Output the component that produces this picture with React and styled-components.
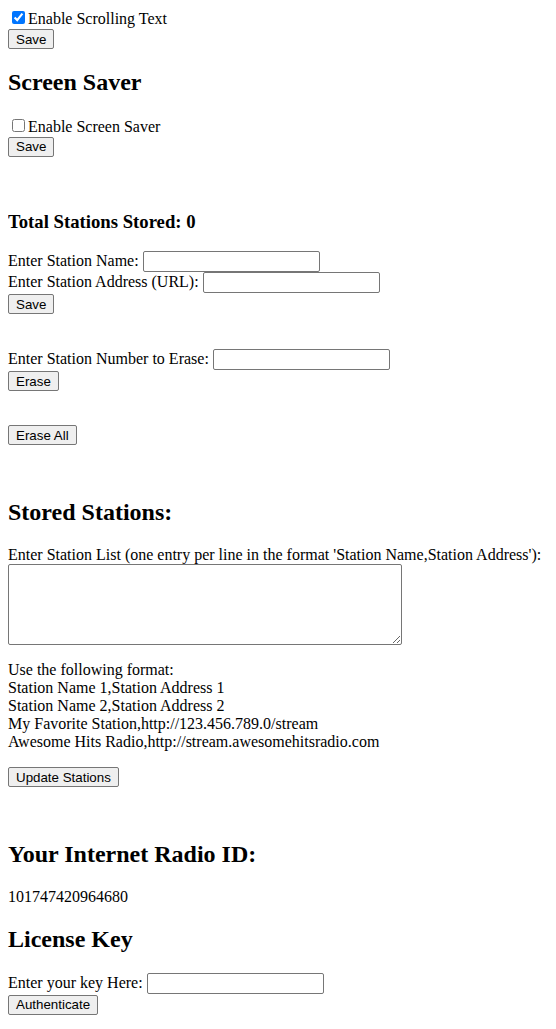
import React from "react";
import styled, { createGlobalStyle } from "styled-components";

const Global = createGlobalStyle`
  body {
    margin: 8px;
    background: #ffffff;
    color: #000000;
    font-family: "Liberation Serif", "Times New Roman", serif;
    font-size: 16px;
  }
`;

const Section = styled.div`
  padding-top: ${(p) => p.gap || 0}px;
`;

const Heading = styled.h2`
  font-size: 24px;
  font-weight: 700;
  margin: 19.92px 0;
`;

const SubHeading = styled.h3`
  font-size: 18.72px;
  font-weight: 700;
  margin: 18.72px 0;
`;

const Row = styled.div``;

const Check = styled.input.attrs({ type: "checkbox" })`
  margin: 3px 3px 3px 4px;
  width: 13px;
  height: 13px;
`;

const Field = styled.input.attrs({ type: "text" })`
  box-sizing: border-box;
  width: 177px;
  height: 21px;
  margin: 0;
  padding: 1px 2px;
  border: 1px solid #767676;
  border-radius: 2px;
  font-family: "Liberation Sans", Arial, sans-serif;
  font-size: 13.33px;
`;

const Button = styled.button`
  display: block;
  height: 20px;
  margin: ${(p) => p.top || 0}px 0 0;
  padding: 1px 7px;
  background: #efefef;
  border: 1px solid #767676;
  border-radius: 2px;
  color: #000;
  font-family: "Liberation Sans", Arial, sans-serif;
  font-size: 13.33px;
`;

const Label = styled.div``;

const ListBox = styled.textarea`
  display: block;
  box-sizing: border-box;
  width: 394px;
  height: 81px;
  margin: 0;
  padding: 2px;
  border: 1px solid #767676;
  border-radius: 2px;
  font-family: "Liberation Mono", monospace;
  font-size: 13.33px;
`;

const Para = styled.p`
  margin: 16px 0;
`;

export default function App() {
  return (
    <>
      <Global />
      <Row>
        <Check defaultChecked />
        Enable Scrolling Text
      </Row>
      <Button top={1}>Save</Button>

      <Heading>Screen Saver</Heading>
      <Row>
        <Check />
        Enable Screen Saver
      </Row>
      <Button top={1}>Save</Button>

      <Section gap={35}>
        <SubHeading>Total Stations Stored: 0</SubHeading>
        <Row>
          Enter Station Name: <Field />
        </Row>
        <Row>
          Enter Station Address (URL): <Field />
        </Row>
        <Button top={1}>Save</Button>
      </Section>

      <Section gap={35}>
        <Row>
          Enter Station Number to Erase: <Field />
        </Row>
        <Button top={1}>Erase</Button>
      </Section>

      <Section gap={34}>
        <Button>Erase All</Button>
      </Section>

      <Section gap={34}>
        <Heading>Stored Stations:</Heading>
        <Label>
          Enter Station List (one entry per line in the format 'Station
          Name,Station Address'):
        </Label>
        <ListBox />
        <Para>
          Use the following format:
          <br />
          Station Name 1,Station Address 1
          <br />
          Station Name 2,Station Address 2
          <br />
          My Favorite Station,http://123.456.789.0/stream
          <br />
          Awesome Hits Radio,http://stream.awesomehitsradio.com
        </Para>
        <Button>Update Stations</Button>
      </Section>

      <Section gap={34}>
        <Heading>Your Internet Radio ID:</Heading>
        <Para>101747420964680</Para>
        <Heading>License Key</Heading>
        <Row>
          Enter your key Here: <Field />
        </Row>
        <Button top={1}>Authenticate</Button>
      </Section>
    </>
  );
}
